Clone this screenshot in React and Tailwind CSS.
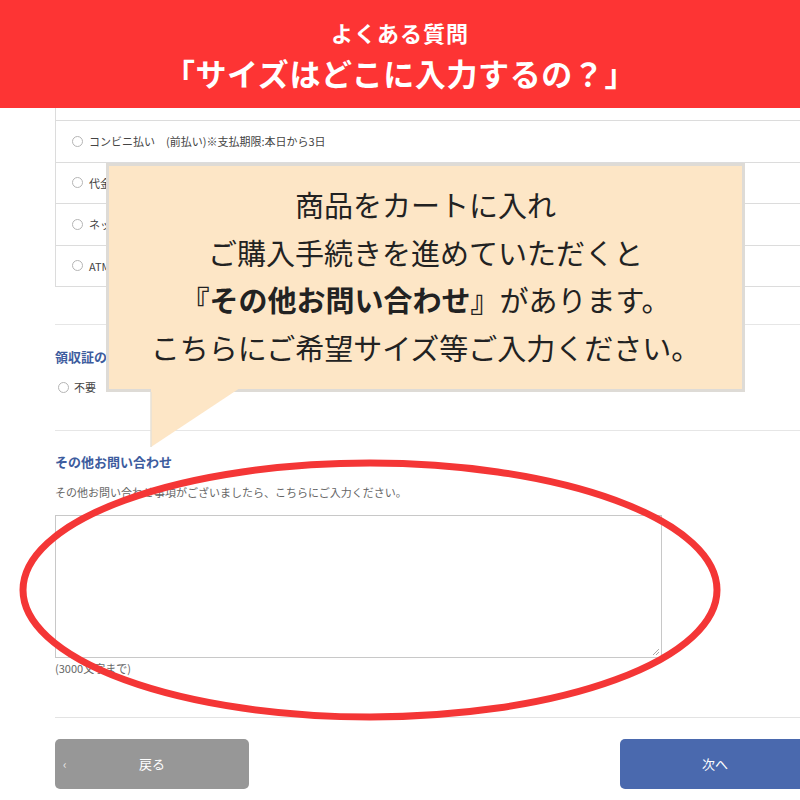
import React from "react";

const jp = { fontFamily: '"Noto Sans CJK JP", "Noto Sans", sans-serif' };

function Radio({ className = "" }) {
  return <span className={"inline-block w-[11px] h-[11px] rounded-full border border-[#b5b5b5] bg-white shrink-0 " + className} />;
}

function Row({ label }) {
  return (
    <div className="flex items-center h-[41.5px] pl-[16px] border-b border-[#dcdcdc]">
      <Radio />
      <span className="ml-[6px] text-[11px] text-[#444]">{label}</span>
    </div>
  );
}

export default function App() {
  return (
    <div className="relative w-[800px] h-[800px] overflow-hidden bg-white" style={jp}>
      {/* Header */}
      <div className="h-[108px] bg-[#fd3434] flex flex-col items-center pt-[18px]">
        <div className="h-[28px] leading-[28px] text-[22px] font-bold text-white tracking-[1px]">よくある質問</div>
        <div className="mt-[7px] h-[40px] leading-[40px] text-[31px] font-bold text-white tracking-[0.6px]">「サイズはどこに入力するの？」</div>
      </div>

      {/* Content */}
      <div className="pl-[55px]">
        <div className="border-l border-[#dcdcdc] pt-[12px]">
          <div className="border-t border-[#dcdcdc]">
            <Row label="コンビニ払い　(前払い)※支払期限:本日から3日" />
            <Row label="代金引換" />
            <Row label="ネットバンキング" />
            <Row label="ATM払い" />
          </div>
        </div>

        <div className="mt-[37px] border-t border-[#e6e6e6]">
          <div className="pt-[23px] h-[41px] text-[13px] leading-[18px] font-bold text-[#3d5c9e]">領収証の発行</div>
          <div className="flex items-center h-[20px] mt-[11px] pl-[3px]">
            <Radio />
            <span className="ml-[5px] text-[11px] text-[#444]">不要</span>
          </div>
        </div>

        <div className="mt-[33px] border-t border-[#e6e6e6]">
          <div className="pt-[22px] text-[13px] leading-[18px] font-bold text-[#3d5c9e]">その他お問い合わせ</div>
          <div className="mt-[13px] text-[11px] leading-[16px] text-[#666]">その他お問い合わせ事項がございましたら、こちらにご入力ください。</div>
          <div className="mt-[15px] relative w-[607px] h-[143px] border border-[#c8c8c8] bg-white">
            <svg className="absolute right-[1px] bottom-[1px]" width="9" height="9" viewBox="0 0 9 9">
              <path d="M8 2 L2 8 M8 5 L5 8" stroke="#aaa" strokeWidth="1" />
            </svg>
          </div>
          <div className="mt-[2px] text-[11px] leading-[16px] text-[#666]">(3000文字まで)</div>
        </div>

        <div className="mt-[41px] border-t border-[#e3e3e3]">
          <div className="mt-[21px] flex justify-between">
            <div className="relative w-[194px] h-[50px] rounded-[5px] bg-[#979797] flex items-center justify-center">
              <span className="absolute left-[8px] text-[12px] text-[#e8e8e8]">‹</span>
              <span className="text-[13px] text-white">戻る</span>
            </div>
            <div className="w-[190px] h-[50px] rounded-l-[5px] bg-[#4a69ae] flex items-center justify-center mr-[-10px]">
              <span className="text-[13px] text-white">次へ</span>
            </div>
          </div>
        </div>
      </div>

      {/* Speech bubble */}
      <div className="absolute left-[106px] top-[163px] w-[639px] h-[229px] bg-[#fde6c6] border-[3px] border-[#dedbd6] flex flex-col items-center justify-center pb-[3px] text-[29px] leading-[47.5px] text-[#222]">
        <div>商品をカートに入れ</div>
        <div>ご購入手続きを進めていただくと</div>
        <div><span className="font-bold">『その他お問い合わせ』</span>があります。</div>
        <div>こちらにご希望サイズ等ご入力ください。</div>
      </div>
      <svg className="absolute left-0 top-0 pointer-events-none" width="800" height="800">
        <polygon points="151,388 240,388 151,447" fill="#fde6c6" />
        <line x1="151" y1="392" x2="151" y2="447" stroke="#e6e0d6" strokeWidth="1.5" />
        <ellipse cx="370" cy="590" rx="347" ry="127" fill="none" stroke="#f43636" strokeWidth="7" />
      </svg>
    </div>
  );
}
